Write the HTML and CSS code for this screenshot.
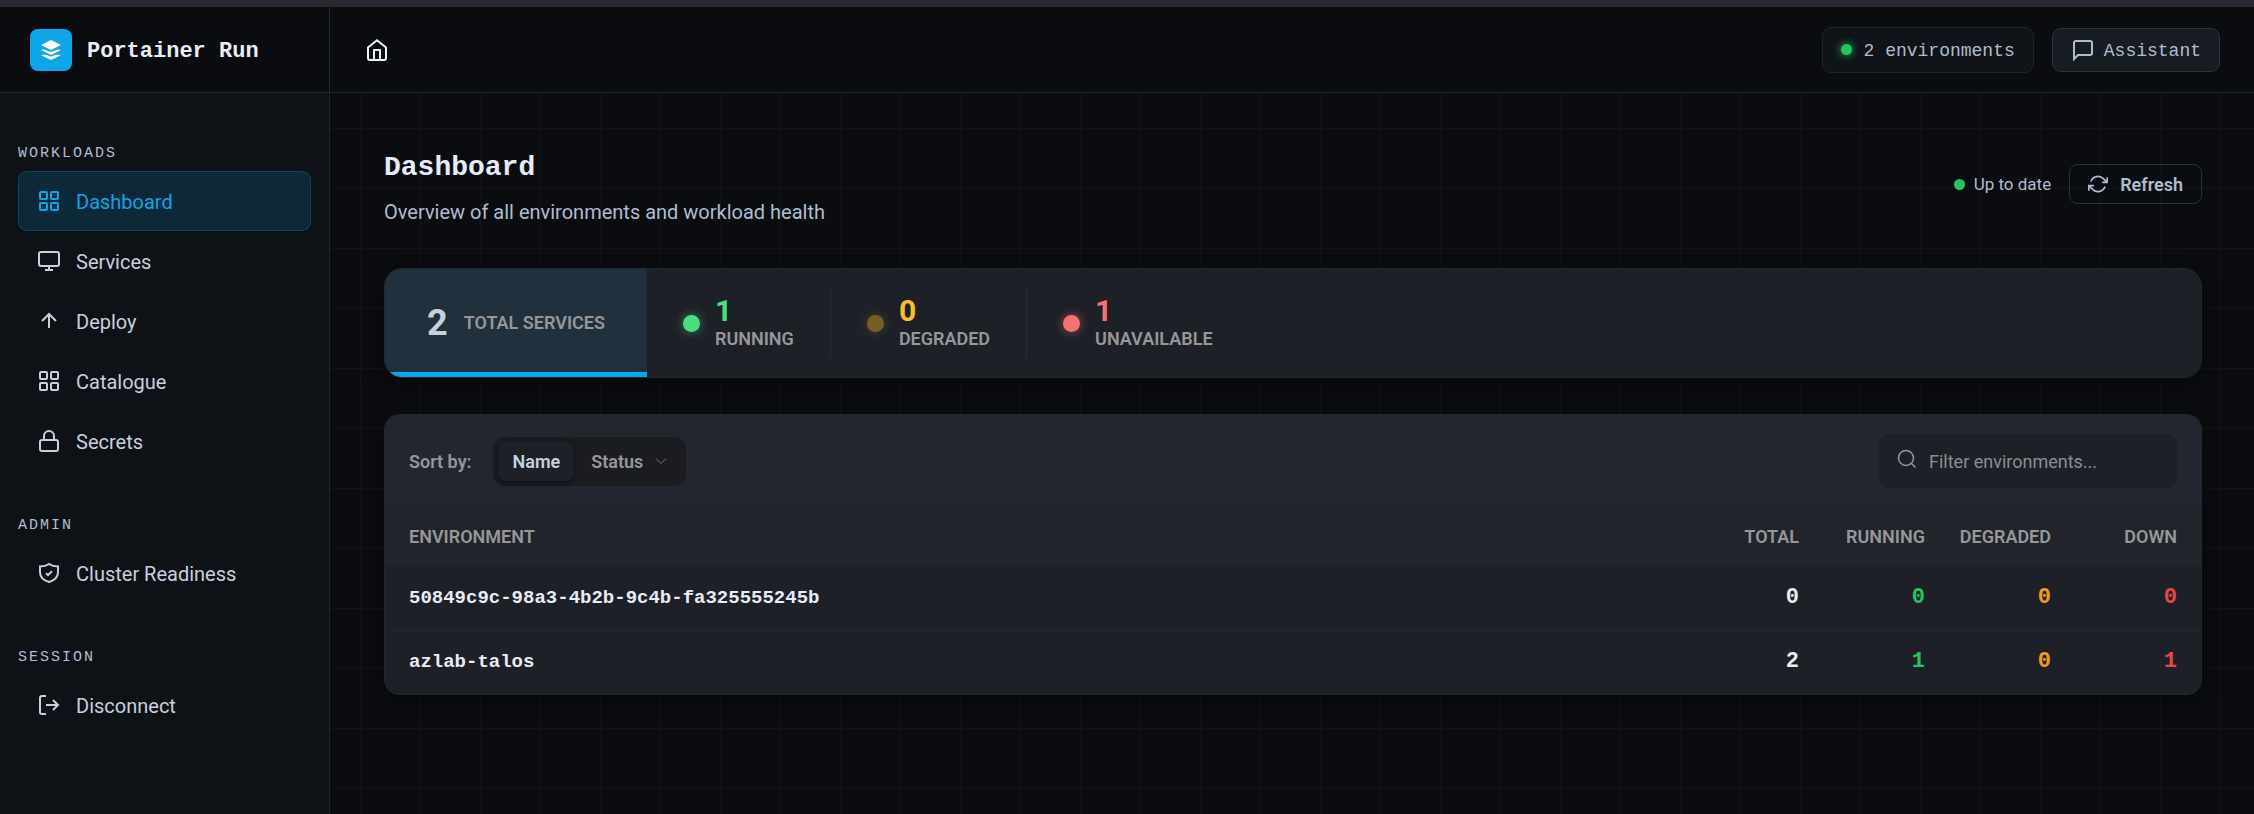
FILE: index.html
```html
<!DOCTYPE html>
<html lang="en">
<head>
<meta charset="utf-8">
<title>Portainer Run</title>
<link rel="stylesheet" href="styles.css">
</head>
<body>
<div class="strip"></div>
<div class="app">
  <div class="brand">
    <svg class="logo" viewBox="0 0 42 42" aria-hidden="true"><rect width="42" height="42" rx="8" fill="#0ea5e9"/><path fill="#fff" d="M21 11l10 5-10 5-10-5zM11 21l3-.6 7 2.600 7-2.600 3 .6-10 5zM11 26.200l4-.6 6 2 6-2 4 .6-10 4.800z"/></svg>
    <span class="brand-name">Portainer Run</span>
  </div>
  <header class="topbar">
    <a class="home" href="#" aria-label="Home"><svg class="icon" width="24" height="24" viewBox="0 0 24 24"><path d="M3 9.500L12 2.300l9 7.200V20a2 2 0 0 1-2 2H5a2 2 0 0 1-2-2z"/><path d="M9 22V12h6v10"/></svg></a>
    <div class="topbar-right">
      <span class="pill"><span class="dot dot-glow"></span><span class="text">2 environments</span></span>
      <button class="assistant" type="button"><svg class="icon" width="24" height="24" viewBox="0 0 24 24"><path d="M21 15a2 2 0 0 1-2 2H7l-4 4V5a2 2 0 0 1 2-2h14a2 2 0 0 1 2 2z"/></svg><span class="text">Assistant</span></button>
    </div>
  </header>
  <nav class="sidebar">
    <h2 class="nav-title">WORKLOADS</h2>
    <a class="nav-item active" href="#"><svg class="icon" width="24" height="24" viewBox="0 0 24 24"><rect x="3" y="3" width="7" height="7" rx="1"/><rect x="14" y="3" width="7" height="7" rx="1"/><rect x="3" y="14" width="7" height="7" rx="1"/><rect x="14" y="14" width="7" height="7" rx="1"/></svg><span class="text">Dashboard</span></a>
    <a class="nav-item" href="#"><svg class="icon" width="24" height="24" viewBox="0 0 24 24"><rect x="2" y="3" width="20" height="14" rx="2"/><path d="M8 21h8M12 17v4"/></svg><span class="text">Services</span></a>
    <a class="nav-item" href="#"><svg class="icon" width="24" height="24" viewBox="0 0 24 24"><path d="M12 19V5M5 12l7-7 7 7"/></svg><span class="text">Deploy</span></a>
    <a class="nav-item" href="#"><svg class="icon" width="24" height="24" viewBox="0 0 24 24"><rect x="3" y="3" width="7" height="7" rx="1"/><rect x="14" y="3" width="7" height="7" rx="1"/><rect x="3" y="14" width="7" height="7" rx="1"/><rect x="14" y="14" width="7" height="7" rx="1"/></svg><span class="text">Catalogue</span></a>
    <a class="nav-item" href="#"><svg class="icon" width="24" height="24" viewBox="0 0 24 24"><rect x="3" y="11" width="18" height="11" rx="2"/><path d="M7 11V7a5 5 0 0 1 10 0v4"/></svg><span class="text">Secrets</span></a>
    <h2 class="nav-title">ADMIN</h2>
    <a class="nav-item" href="#"><svg class="icon" width="24" height="24" viewBox="0 0 24 24"><path d="M12 3c2.500 1.700 5.500 2.400 9 2.400V11c0 5-4 8.500-9 10-5-1.500-9-5-9-10V5.400C6.500 5.400 9.500 4.700 12 3z"/><path d="M9 12.300l2 1.900 4-4"/></svg><span class="text">Cluster Readiness</span></a>
    <h2 class="nav-title">SESSION</h2>
    <a class="nav-item" href="#"><svg class="icon" width="24" height="24" viewBox="0 0 24 24"><path d="M9 21H5a2 2 0 0 1-2-2V5a2 2 0 0 1 2-2h4M16 17l5-5-5-5M21 12H9"/></svg><span class="text">Disconnect</span></a>
  </nav>
  <main class="main">
    <div class="page-head">
      <div>
        <h1 class="title">Dashboard</h1>
        <p class="subtitle">Overview of all environments and workload health</p>
      </div>
      <div class="status"><span class="dot"></span><span class="status-text">Up to date</span>
        <button class="refresh" type="button"><svg class="icon" width="20" height="20" viewBox="0 0 24 24"><path d="M23 4v6h-6M1 20v-6h6"/><path d="M3.500 9a9 9 0 0 1 14.900-3.400L23 10M1 14l4.600 4.400A9 9 0 0 0 20.500 15"/></svg>Refresh</button>
      </div>
    </div>
    <section class="stats">
      <div class="stat-total"><span class="total-num">2</span><span class="label">TOTAL SERVICES</span></div>
      <div class="stat running"><span class="stat-dot"></span><div><div class="num">1</div><div class="label">RUNNING</div></div></div>
      <div class="stat degraded"><span class="stat-dot"></span><div><div class="num">0</div><div class="label">DEGRADED</div></div></div>
      <div class="stat unavailable"><span class="stat-dot"></span><div><div class="num">1</div><div class="label">UNAVAILABLE</div></div></div>
    </section>
    <section class="card">
      <div class="toolbar">
        <span class="sort-label">Sort by:</span>
        <div class="segment">
          <button class="seg on" type="button">Name</button>
          <button class="seg" type="button">Status<svg class="chevron" width="12" height="8" viewBox="0 0 12 8"><path d="M1 1.500l5 5 5-5"/></svg></button>
        </div>
        <label class="search"><svg class="icon search-icon" width="20" height="20" viewBox="0 0 20 20"><circle cx="9" cy="9" r="7.500"/><path d="M14.500 14.500L18.500 18.500"/></svg><input type="text" placeholder="Filter environments..." aria-label="Filter environments"></label>
      </div>
      <table class="table">
        <thead><tr><th class="env">ENVIRONMENT</th><th>TOTAL</th><th>RUNNING</th><th>DEGRADED</th><th>DOWN</th></tr></thead>
        <tbody>
          <tr><td class="env">50849c9c-98a3-4b2b-9c4b-fa325555245b</td><td>0</td><td class="green">0</td><td class="amber">0</td><td class="red">0</td></tr>
          <tr><td class="env">azlab-talos</td><td>2</td><td class="green">1</td><td class="amber">0</td><td class="red">1</td></tr>
        </tbody>
      </table>
    </section>
  </main>
</div>
</body>
</html>
```
FILE: styles.css
```css
* { box-sizing: border-box; }
body {
  margin: 0;
  min-height: 100vh;
  display: flex;
  flex-direction: column;
  background-color: #0a0c0f;
  color: #c8d0de;
  font-family: Roboto, "Liberation Sans", sans-serif;
}
button, input { font: inherit; color: inherit; }
a { color: inherit; text-decoration: none; }
h1, h2, p { margin: 0; }
.icon { flex: none; fill: none; stroke: currentColor; stroke-width: 2; }
.text { padding-top: 2px; }
.strip { height: 7px; background: #2b2833; }

.app {
  flex: 1;
  display: grid;
  grid-template-columns: 330px 1fr;
  grid-template-rows: 86px 1fr;
  background-image:
    linear-gradient(#101318 1px, transparent 1px),
    linear-gradient(90deg, #101318 1px, transparent 1px);
  background-size: 60px 60px;
  background-position: 0 1px;
}

.brand {
  display: flex;
  align-items: center;
  gap: 15px;
  padding-left: 30px;
  background: #0a0c0f;
  border-right: 1px solid #222834;
  border-bottom: 1px solid #1e2430;
}
.logo { width: 42px; height: 42px; }
.brand-name {
  padding-top: 4px;
  font: bold 22px/28px "Liberation Mono", monospace;
  color: #e8ecf6;
}
.topbar {
  display: flex;
  align-items: center;
  justify-content: space-between;
  padding: 0 34px 0 35px;
  background: #0a0c0f;
  border-bottom: 1px solid #1e2430;
}
.home { display: flex; color: #eef2fa; }
.topbar-right {
  display: flex;
  align-items: center;
  gap: 18px;
  font: 18px/24px "Liberation Mono", monospace;
  color: #b0bccf;
}
.pill {
  display: flex;
  align-items: center;
  gap: 12px;
  height: 46px;
  padding: 0 18px;
  background: #101317;
  border: 1px solid #1e2430;
  border-radius: 9px;
}
.dot { flex: none; width: 11px; height: 11px; border-radius: 50%; background: #22c55e; }
.dot-glow { box-shadow: 0 0 9px #22c55e; }
.assistant {
  display: flex;
  align-items: center;
  gap: 9px;
  height: 44px;
  padding: 0 18px;
  background: #171c22;
  border: 1px solid #2a3342;
  border-radius: 9px;
}

.sidebar {
  padding: 44px 18px 0;
  background: rgba(16, 20, 25, 0.84);
  border-right: 1px solid #1e242e;
}
.nav-title {
  padding: 7px 0 8px;
  font: 400 15px/19px "Liberation Mono", monospace;
  letter-spacing: 2px;
  color: #b0bccf;
}
.nav-item + .nav-title { margin-top: 38px; }
.nav-item {
  display: flex;
  align-items: center;
  gap: 15px;
  height: 60px;
  padding: 0 18px;
  border: 1px solid transparent;
  border-radius: 9px;
  font-size: 20px;
}
.nav-item.active {
  color: #0ea5e9;
  background: rgba(14, 165, 233, 0.15);
  border-color: rgba(14, 165, 233, 0.25);
}

.main { padding: 54px 52px 40px 54px; }
.page-head { display: flex; align-items: center; justify-content: space-between; }
.title { font: bold 28px/42px "Liberation Mono", monospace; color: #e8ecf6; }
.subtitle { margin-top: 8px; font-size: 20px; line-height: 30px; color: #b0bccf; }
.status { display: flex; align-items: center; padding-bottom: 6px; font-size: 17px; color: #b0bccf; }
.status-text { margin: 0 18px 0 9px; }
.refresh {
  display: flex;
  align-items: center;
  gap: 12px;
  height: 40px;
  padding: 0 18px;
  background: transparent;
  border: 1px solid #2a3040;
  border-radius: 9px;
  font-size: 18px;
  font-weight: 600;
}

.stats {
  display: flex;
  height: 110px;
  margin-top: 41px;
  overflow: hidden;
  background: #1d2027;
  border: 1px solid #202833;
  border-radius: 18px;
  box-shadow: 0 6px 18px rgba(0, 0, 0, 0.4);
}
.stat-total {
  display: flex;
  align-items: center;
  gap: 16px;
  padding: 5px 42px 0;
  background: #20303d;
  border-bottom: 5px solid #0ea5e9;
}
.total-num { font-size: 36px; font-weight: 700; }
.label { font-size: 18px; line-height: 24px; font-weight: 600; color: #969799; }
.stat {
  display: flex;
  align-items: center;
  gap: 15px;
  height: 72px;
  margin: 18px 0;
  padding: 0 36px;
  border-right: 1px solid #222b38;
}
.stat:last-child { border-right: 0; }
.num { font-size: 30px; line-height: 32px; font-weight: 700; }
.stat-dot {
  width: 17px;
  height: 17px;
  border-radius: 50%;
  background: currentColor;
  box-shadow: 0 0 12px -2px currentColor;
}
.running { color: #4ade80; }
.degraded { color: #fbbf24; }
.degraded .stat-dot { opacity: 0.4; }
.unavailable { color: #f87171; }

.card {
  margin-top: 36px;
  overflow: hidden;
  background: #1d2027;
  border: 1px solid #202833;
  border-radius: 15px;
  box-shadow: 0 6px 18px rgba(0, 0, 0, 0.4);
}
.toolbar {
  display: flex;
  align-items: center;
  height: 92px;
  padding: 0 24px;
  background: #23262e;
  font-size: 18px;
}
.sort-label { font-weight: 600; color: #969799; }
.segment {
  display: flex;
  gap: 3px;
  margin-left: 22px;
  padding: 5px;
  background: #1b1c20;
  border-radius: 12px;
}
.seg {
  display: flex;
  align-items: center;
  gap: 12px;
  height: 39px;
  padding: 0 14px;
  border: 0;
  border-radius: 9px;
  background: transparent;
  font-weight: 600;
  color: #969799;
}
.seg.on { background: #1d2027; color: #c8d0de; box-shadow: 0 2px 5px rgba(0, 0, 0, 0.4); }
.chevron { fill: none; stroke: #77797d; stroke-width: 1; }
.search {
  display: flex;
  align-items: center;
  gap: 12px;
  width: 298px;
  height: 54px;
  margin-left: auto;
  padding: 0 18px;
  background: #1d2027;
  border-radius: 10px;
  color: #969799;
}
.search-icon { margin-bottom: 4px; stroke-width: 1.5; }
.search input { flex: 1; min-width: 0; padding: 0; border: 0; outline: 0; background: transparent; }
.search input::placeholder { color: #8c8d90; opacity: 1; }

.table { width: 100%; border-collapse: collapse; table-layout: fixed; }
.table th {
  width: 126px;
  height: 59px;
  padding: 0;
  background: #21242b;
  font-size: 18px;
  font-weight: 600;
  text-align: right;
  color: #969799;
}
.table td {
  height: 64px;
  padding: 0;
  font: bold 22px/24px "Liberation Mono", monospace;
  text-align: right;
  color: #e8ecf6;
}
.table tbody tr + tr td { border-top: 1px solid #21262f; }
.table .env { width: auto; padding-left: 24px; text-align: left; }
.table td.env { font-size: 19px; }
.table th:last-child, .table td:last-child { width: 150px; padding-right: 24px; }
.table .green { color: #22c55e; }
.table .amber { color: #f59e0b; }
.table .red { color: #ef4444; }
```
